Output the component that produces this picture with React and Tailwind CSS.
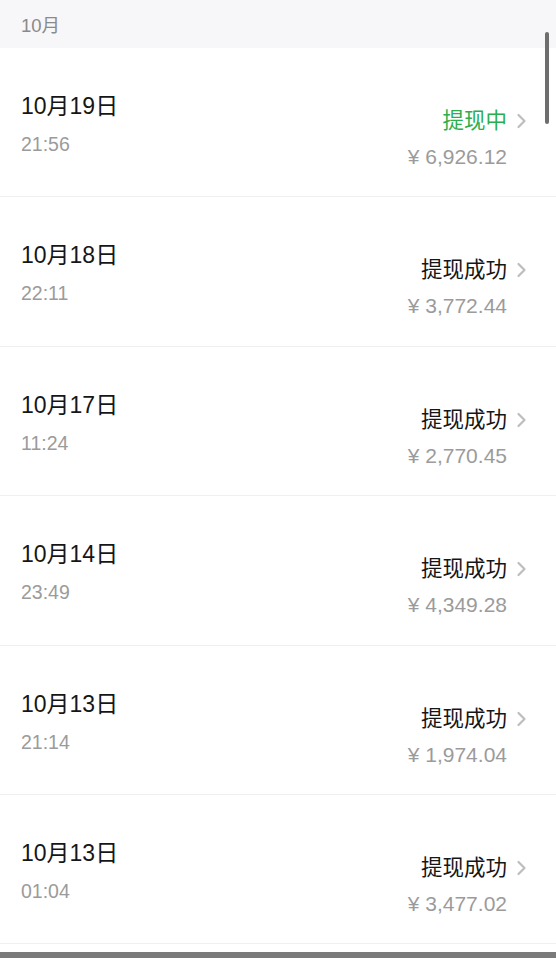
import React from "react";

const rows = [
  { date: "10月19日", time: "21:56", status: "提现中", pending: true, amount: "¥ 6,926.12" },
  { date: "10月18日", time: "22:11", status: "提现成功", amount: "¥ 3,772.44" },
  { date: "10月17日", time: "11:24", status: "提现成功", amount: "¥ 2,770.45" },
  { date: "10月14日", time: "23:49", status: "提现成功", amount: "¥ 4,349.28" },
  { date: "10月13日", time: "21:14", status: "提现成功", amount: "¥ 1,974.04" },
  { date: "10月13日", time: "01:04", status: "提现成功", amount: "¥ 3,477.02" },
];

const Chevron = () => (
  <svg width="11" height="16" viewBox="0 0 11 16" className="ml-[9px] shrink-0">
    <polyline points="2.5,2 8.5,8 2.5,14" fill="none" stroke="#bdbdbd" strokeWidth="2.2" strokeLinecap="round" strokeLinejoin="round" />
  </svg>
);

function Row({ item }) {
  return (
    <div className="flex h-[149.4px] justify-between border-b border-[#efefef] bg-white pl-[21px] pr-[29px]">
      <div className="pt-[43px]">
        <div className="text-[23px] leading-[30px] text-[#161616]">{item.date}</div>
        <div className="mt-[10px] text-[19.5px] leading-[26px] text-[#9b9b9b]">{item.time}</div>
      </div>
      <div className="flex flex-col items-end pt-[58px]">
        <div className="flex items-center">
          <span className={`text-[21.5px] leading-[30px] ${item.pending ? "text-[#2bae4e]" : "text-[#161616]"}`}>
            {item.status}
          </span>
          <Chevron />
        </div>
        <div className="mr-[20px] mt-[7px] text-[21px] leading-[28px] text-[#9b9b9b]">{item.amount}</div>
      </div>
    </div>
  );
}

export default function App() {
  return (
    <div
      className="relative flex h-[958px] w-full flex-col overflow-hidden bg-white"
      style={{ fontFamily: '"Liberation Sans", "Noto Sans CJK SC", sans-serif' }}
    >
      <div className="flex h-[48px] shrink-0 items-center bg-[#f7f6f9] px-[21px] pt-[3px] text-[18.5px] text-[#8a8a8a]">
        10月
      </div>
      {rows.map((item, i) => (
        <Row key={i} item={item} />
      ))}
      <div className="flex-1 bg-white" />
      <div className="h-[6px] shrink-0 bg-[#7a7a7a]" />
      <div className="absolute right-[7px] top-[32px] h-[92px] w-[4px] rounded-full bg-[#6e6e6e]" />
    </div>
  );
}
